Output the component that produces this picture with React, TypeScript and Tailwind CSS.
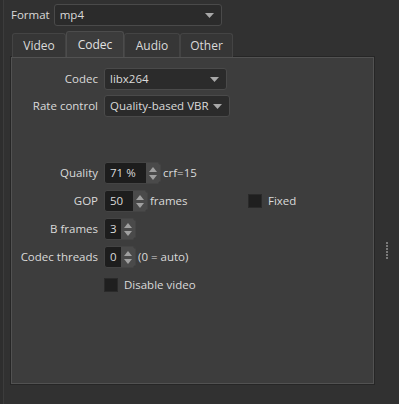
import React from 'react';

const Caret = () => (
  <svg width="9" height="5" viewBox="0 0 9 5" className="shrink-0">
    <path d="M0 0 H9 L4.5 5 Z" fill="#a8a8a8" />
  </svg>
);

const Combo = ({ value, width }: { value: string; width: string }) => (
  <div
    className={`${width} h-[22px] shrink-0 flex items-center justify-between pl-[5px] pr-[7px] bg-[#2b2b2b] border border-[#4a4a4a] rounded-[3px]`}
  >
    <span>{value}</span>
    <Caret />
  </div>
);

const Spin = ({ value, width }: { value: string; width: string }) => (
  <div
    className={`${width} h-[22px] shrink-0 flex bg-[#1d1d1d] border border-[#444] rounded-[3px] overflow-hidden`}
  >
    <div className="flex-1 flex items-center pl-[5px]">{value}</div>
    <div className="w-[14px] bg-[#4a4a4a] flex flex-col items-center justify-center gap-[3px]">
      <svg width="8" height="5" viewBox="0 0 8 5">
        <path d="M0 5 L4 0 L8 5 Z" fill="#a0a0a0" />
      </svg>
      <svg width="8" height="5" viewBox="0 0 8 5">
        <path d="M0 0 H8 L4 5 Z" fill="#a0a0a0" />
      </svg>
    </div>
  </div>
);

const Check = () => (
  <div className="w-[14px] h-[14px] shrink-0 bg-[#1f1f1f] border border-[#2a2a2a]" />
);

const Row = ({ label, children, className = '' }: { label: string; children?: React.ReactNode; className?: string }) => (
  <div className={`flex items-center h-[22px] ${className}`}>
    <div className="w-[92px] shrink-0 text-right pr-[6px]">{label}</div>
    <div className="flex items-center gap-[2px]">{children}</div>
  </div>
);

const tabs = [
  { name: 'Video', w: 'w-[54px]' },
  { name: 'Codec', w: 'w-[58px]', active: true },
  { name: 'Audio', w: 'w-[56px]' },
  { name: 'Other', w: 'w-[53px]' },
];

export default function App() {
  return (
    <div className="w-[399px] h-[404px] bg-[#313131] flex text-[11.5px] text-[#dadada] font-['Open_Sans',sans-serif] overflow-hidden">
      {/* left splitter edge */}
      <div className="w-[4px] bg-[#2e2e2e] border-r border-[#3c3c3c]" />

      <div className="w-[371px] pl-[7px]">
        {/* Format */}
        <div className="flex items-center gap-[4px] mt-[4px]">
          <span>Format</span>
          <Combo value="mp4" width="w-[168px]" />
        </div>

        {/* Tabs */}
        <div className="flex items-end mt-[5px] ml-[1px] h-[26px] text-[12px]">
          {tabs.map((t) => (
            <div
              key={t.name}
              className={`${t.w} flex items-center justify-center rounded-t-[3px] border border-b-0 ${
                t.active
                  ? 'h-[26px] bg-[#3c3c3c] border-[#4c4c4c] text-[#e2e2e2]'
                  : 'h-[24px] bg-[#363636] border-[#444]'
              }`}
            >
              {t.name}
            </div>
          ))}
        </div>

        {/* Panel */}
        <div className="w-[363px] h-[327px] bg-[#3d3d3d] border border-[#525252] shadow-[0_0_0_1px_#262626] pt-[10px]">
          <Row label="Codec">
            <Combo value="libx264" width="w-[123px]" />
          </Row>
          <Row label="Rate control" className="mt-[5px]">
            <Combo value="Quality-based VBR" width="w-[126px]" />
          </Row>

          <Row label="Quality" className="mt-[45px]">
            <Spin value="71 %" width="w-[57px]" />
            <span>crf=15</span>
          </Row>
          <div className="flex items-center mt-[6px]">
            <Row label="GOP">
              <div className="w-[144px] flex items-center gap-[2px]">
                <Spin value="50" width="w-[44px]" />
                <span>frames</span>
              </div>
            </Row>
            <div className="flex items-center gap-[6px]">
              <Check />
              <span>Fixed</span>
            </div>
          </div>
          <Row label="B frames" className="mt-[6px]">
            <Spin value="3" width="w-[32px]" />
          </Row>
          <Row label="Codec threads" className="mt-[6px]">
            <Spin value="0" width="w-[32px]" />
            <span>(0 = auto)</span>
          </Row>
          <Row label="" className="mt-[6px]">
            <div className="flex items-center gap-[6px]">
              <Check />
              <span>Disable video</span>
            </div>
          </Row>
        </div>
      </div>

      {/* right splitter handle */}
      <div className="flex-1 flex items-center justify-center">
        <div className="flex flex-col gap-[1px] mt-[96px]">
          {[0, 1, 2, 3, 4, 5].map((i) => (
            <div key={i} className="w-[2px] h-[2px] bg-[#7a7a7a]" />
          ))}
        </div>
      </div>
    </div>
  );
}
